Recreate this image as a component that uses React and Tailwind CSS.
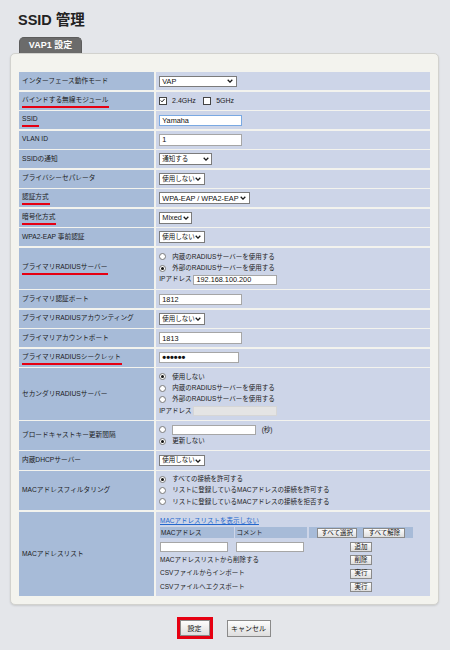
import React from 'react';

const FONT = "font-['Liberation_Sans','Noto_Sans_CJK_JP',sans-serif]";

function Chevron() {
  return (
    <svg width="6" height="4" viewBox="0 0 6 4" className="shrink-0">
      <polyline points="0.7,0.7 3,3.1 5.3,0.7" fill="none" stroke="#1a1a1a" strokeWidth="1.3" />
    </svg>
  );
}

function Select({ value, className, jp }) {
  return (
    <div className={`flex h-[11.7px] items-center justify-between border border-[#7b7b7b] bg-white pl-[2px] pr-[2.5px] ${className}`}>
      <span className={`whitespace-nowrap leading-none text-[#111] ${jp ? 'text-[6.5px]' : 'text-[7.3px]'}`}>{value}</span>
      <Chevron />
    </div>
  );
}

function TextBox({ value, className = 'w-[83px] h-[11.7px]', tone = 'border-[#a6a6a6] bg-white' }) {
  return (
    <div className={`flex items-center border pl-[2px] ${tone} ${className}`}>
      <span className="whitespace-nowrap text-[7.3px] leading-none text-[#111]">{value}</span>
    </div>
  );
}

function Radio({ checked }) {
  return (
    <span className="flex h-[7px] w-[7px] shrink-0 items-center justify-center rounded-full border border-[#7a7a7a] bg-white">
      {checked && <span className="h-[3px] w-[3px] rounded-full bg-[#111]" />}
    </span>
  );
}

function Check({ checked }) {
  return (
    <span className="flex h-[7.3px] w-[7.3px] shrink-0 items-center justify-center border border-[#444] bg-white">
      {checked && (
        <svg width="6" height="5" viewBox="0 0 6 5">
          <polyline points="0.8,2.5 2.3,4 5.2,0.8" fill="none" stroke="#111" strokeWidth="1.1" />
        </svg>
      )}
    </span>
  );
}

function RadioLine({ checked, children }) {
  return (
    <div className="flex h-[11.4px] items-center">
      <Radio checked={checked} />
      <span className="ml-[6px] whitespace-nowrap leading-none">{children}</span>
    </div>
  );
}

function IpLine({ value, disabled }) {
  return (
    <div className="flex h-[11.4px] items-center">
      <span className="whitespace-nowrap leading-none">IPアドレス</span>
      <TextBox
        value={value}
        className="ml-[2px] h-[9.7px] w-[84px]"
        tone={disabled ? 'border-[#d6d6d6] bg-[#e4e4e4]' : 'border-[#a6a6a6] bg-white'}
      />
    </div>
  );
}

function Btn({ children, className = 'w-[22.5px] h-[10px]' }) {
  return (
    <span className={`flex items-center justify-center whitespace-nowrap border border-[#8a8a8a] bg-linear-to-b from-[#fdfdfd] to-[#dedede] text-[6.5px] leading-none text-[#111] ${className}`}>
      {children}
    </span>
  );
}

function Mark({ children }) {
  return <span className="inline-block border-b-2 border-[#e60012] pr-[1px] leading-[12px]">{children}</span>;
}

const single = 'h-[18.2px]';

const rows = [
  { label: 'インターフェース動作モード', h: single, content: <Select value="VAP" className="w-[77.4px]" /> },
  {
    label: <Mark>バインドする無線モジュール</Mark>,
    h: single,
    content: (
      <div className="flex items-center text-[7px] leading-none">
        <Check checked />
        <span className="ml-[5.5px]">2.4GHz</span>
        <span className="ml-[7.6px]"><Check /></span>
        <span className="ml-[5.5px]">5GHz</span>
      </div>
    ),
  },
  { label: <Mark>SSID</Mark>, h: single, content: <TextBox value="Yamaha" tone="border-[#7aa9e2] bg-white" /> },
  { label: 'VLAN ID', h: single, content: <TextBox value="1" /> },
  { label: 'SSIDの通知', h: single, content: <Select value="通知する" jp className="w-[53px]" /> },
  { label: 'プライバシーセパレータ', h: single, content: <Select value="使用しない" jp className="w-[45.7px]" /> },
  { label: <Mark>認証方式</Mark>, h: single, content: <Select value="WPA-EAP / WPA2-EAP" className="w-[90.7px]" /> },
  { label: <Mark>暗号化方式</Mark>, h: single, content: <Select value="Mixed" className="w-[33px]" /> },
  { label: 'WPA2-EAP 事前認証', h: single, content: <Select value="使用しない" jp className="w-[45.7px]" /> },
  {
    label: <Mark>プライマリRADIUSサーバー</Mark>,
    h: 'h-[41.3px]',
    content: (
      <div className="flex flex-col">
        <RadioLine>内蔵のRADIUSサーバーを使用する</RadioLine>
        <RadioLine checked>外部のRADIUSサーバーを使用する</RadioLine>
        <IpLine value="192.168.100.200" />
      </div>
    ),
  },
  { label: 'プライマリ認証ポート', h: single, content: <TextBox value="1812" /> },
  { label: 'プライマリRADIUSアカウンティング', h: single, content: <Select value="使用しない" jp className="w-[45.7px]" /> },
  { label: 'プライマリアカウントポート', h: single, content: <TextBox value="1813" /> },
  {
    label: <Mark>プライマリRADIUSシークレット</Mark>,
    h: single,
    content: (
      <div className="flex h-[11px] w-[80px] items-center border border-[#a6a6a6] bg-white pl-[2px]">
        <span className="text-[11px] leading-none font-bold text-[#111]">••••••</span>
      </div>
    ),
  },
  {
    label: 'セカンダリRADIUSサーバー',
    h: 'h-[51.4px]',
    content: (
      <div className="flex flex-col">
        <RadioLine checked>使用しない</RadioLine>
        <RadioLine>内蔵のRADIUSサーバーを使用する</RadioLine>
        <RadioLine>外部のRADIUSサーバーを使用する</RadioLine>
        <IpLine value="" disabled />
      </div>
    ),
  },
  {
    label: 'ブロードキャストキー更新間隔',
    h: 'h-[29.3px]',
    content: (
      <div className="flex flex-col">
        <div className="flex h-[11.7px] items-center">
          <Radio />
          <TextBox value="" className="ml-[6px] h-[9.7px] w-[83.7px]" />
          <span className="ml-[5.7px] leading-none">(秒)</span>
        </div>
        <RadioLine checked>更新しない</RadioLine>
      </div>
    ),
  },
  { label: '内蔵DHCPサーバー', h: single, content: <Select value="使用しない" jp className="w-[45.7px]" /> },
  {
    label: 'MACアドレスフィルタリング',
    h: 'h-[39.3px]',
    content: (
      <div className="flex flex-col">
        <RadioLine checked>すべての接続を許可する</RadioLine>
        <RadioLine>リストに登録しているMACアドレスの接続を許可する</RadioLine>
        <RadioLine>リストに登録しているMACアドレスの接続を拒否する</RadioLine>
      </div>
    ),
  },
  {
    label: 'MACアドレスリスト',
    h: 'h-[84.7px]',
    content: (
      <div className="flex flex-col pl-[0.7px]">
        <span className="h-[9px] leading-[9px] text-[#2467cc] underline">MACアドレスリストを表示しない</span>
        <div className="mt-[2.7px] grid w-fit grid-cols-[74px_72px_104px] gap-x-[1.5px]">
          <div className="flex h-[10.6px] items-center bg-[#a7bbd8] pl-[1px] leading-none">MACアドレス</div>
          <div className="flex h-[10.6px] items-center bg-[#a7bbd8] pl-[1px] leading-none">コメント</div>
          <div className="flex h-[10.6px] items-center justify-center gap-[6px] bg-[#a7bbd8]">
            <Btn className="h-[9.5px] w-[40.6px]">すべて選択</Btn>
            <Btn className="h-[9.5px] w-[41.7px]">すべて解除</Btn>
          </div>
        </div>
        <div className="mt-[4px] grid w-fit grid-cols-[74px_72px_104px] gap-x-[1.5px] gap-y-[3.3px]">
          <div className="flex h-[10px] items-center">
            <TextBox value="" className="h-[9.4px] w-[68.3px]" />
          </div>
          <div className="flex h-[10px] items-center pl-[1px]">
            <TextBox value="" className="h-[9.4px] w-[67.6px]" />
          </div>
          <div className="flex h-[10px] items-center justify-center">
            <Btn>追加</Btn>
          </div>
          <div className="col-span-2 flex h-[10px] items-center leading-none">MACアドレスリストから削除する</div>
          <div className="flex h-[10px] items-center justify-center">
            <Btn>削除</Btn>
          </div>
          <div className="col-span-2 flex h-[10px] items-center leading-none">CSVファイルからインポート</div>
          <div className="flex h-[10px] items-center justify-center">
            <Btn>実行</Btn>
          </div>
          <div className="col-span-2 flex h-[10px] items-center leading-none">CSVファイルへエクスポート</div>
          <div className="flex h-[10px] items-center justify-center">
            <Btn>実行</Btn>
          </div>
        </div>
      </div>
    ),
  },
];

export default function App() {
  return (
    <div className={`min-h-[650px] w-full bg-[#e4e6ea] ${FONT} text-[#1c1c1c]`}>
      <h1 className="pl-[18px] pt-[12px] text-[14.5px] leading-[16px] font-bold text-[#222]">SSID 管理</h1>

      <div className="ml-[19px] mt-[9px] flex h-[16px] w-[63px] items-center justify-center rounded-t-[5px] border border-b-0 border-[#5c5c5c] bg-[#6b6b6b] text-[9px] font-bold text-white">
        VAP1 設定
      </div>

      <div className="mx-[10px] w-[429px] rounded-[5px] border border-[#d2d2ce] bg-[#f3f3ee] px-[8px] pt-[18.3px] pb-[8px] shadow-[0_1px_2px_rgba(0,0,0,0.12)]">
        <div className="grid grid-cols-[135px_1fr] gap-x-[2px] gap-y-[1.3px]">
          {rows.map((r, i) => (
            <React.Fragment key={i}>
              <div className={`flex items-center whitespace-nowrap bg-[#a7bbd8] pl-[3px] text-[6.7px] leading-none text-[#1c1c1c] ${r.h}`}>
                {r.label}
              </div>
              <div className="flex items-center bg-[#cdd5e8] pl-[3.3px] text-[6.5px] text-[#1c1c1c]">{r.content}</div>
            </React.Fragment>
          ))}
        </div>
      </div>

      <div className="mt-[12px] flex items-center justify-center gap-[14px] pr-[3px]">
        <div className="border-[3px] border-[#e60012]">
          <Btn className="h-[16px] w-[30px] text-[7px]">設定</Btn>
        </div>
        <Btn className="h-[17px] w-[44px] text-[7px]">キャンセル</Btn>
      </div>
    </div>
  );
}
